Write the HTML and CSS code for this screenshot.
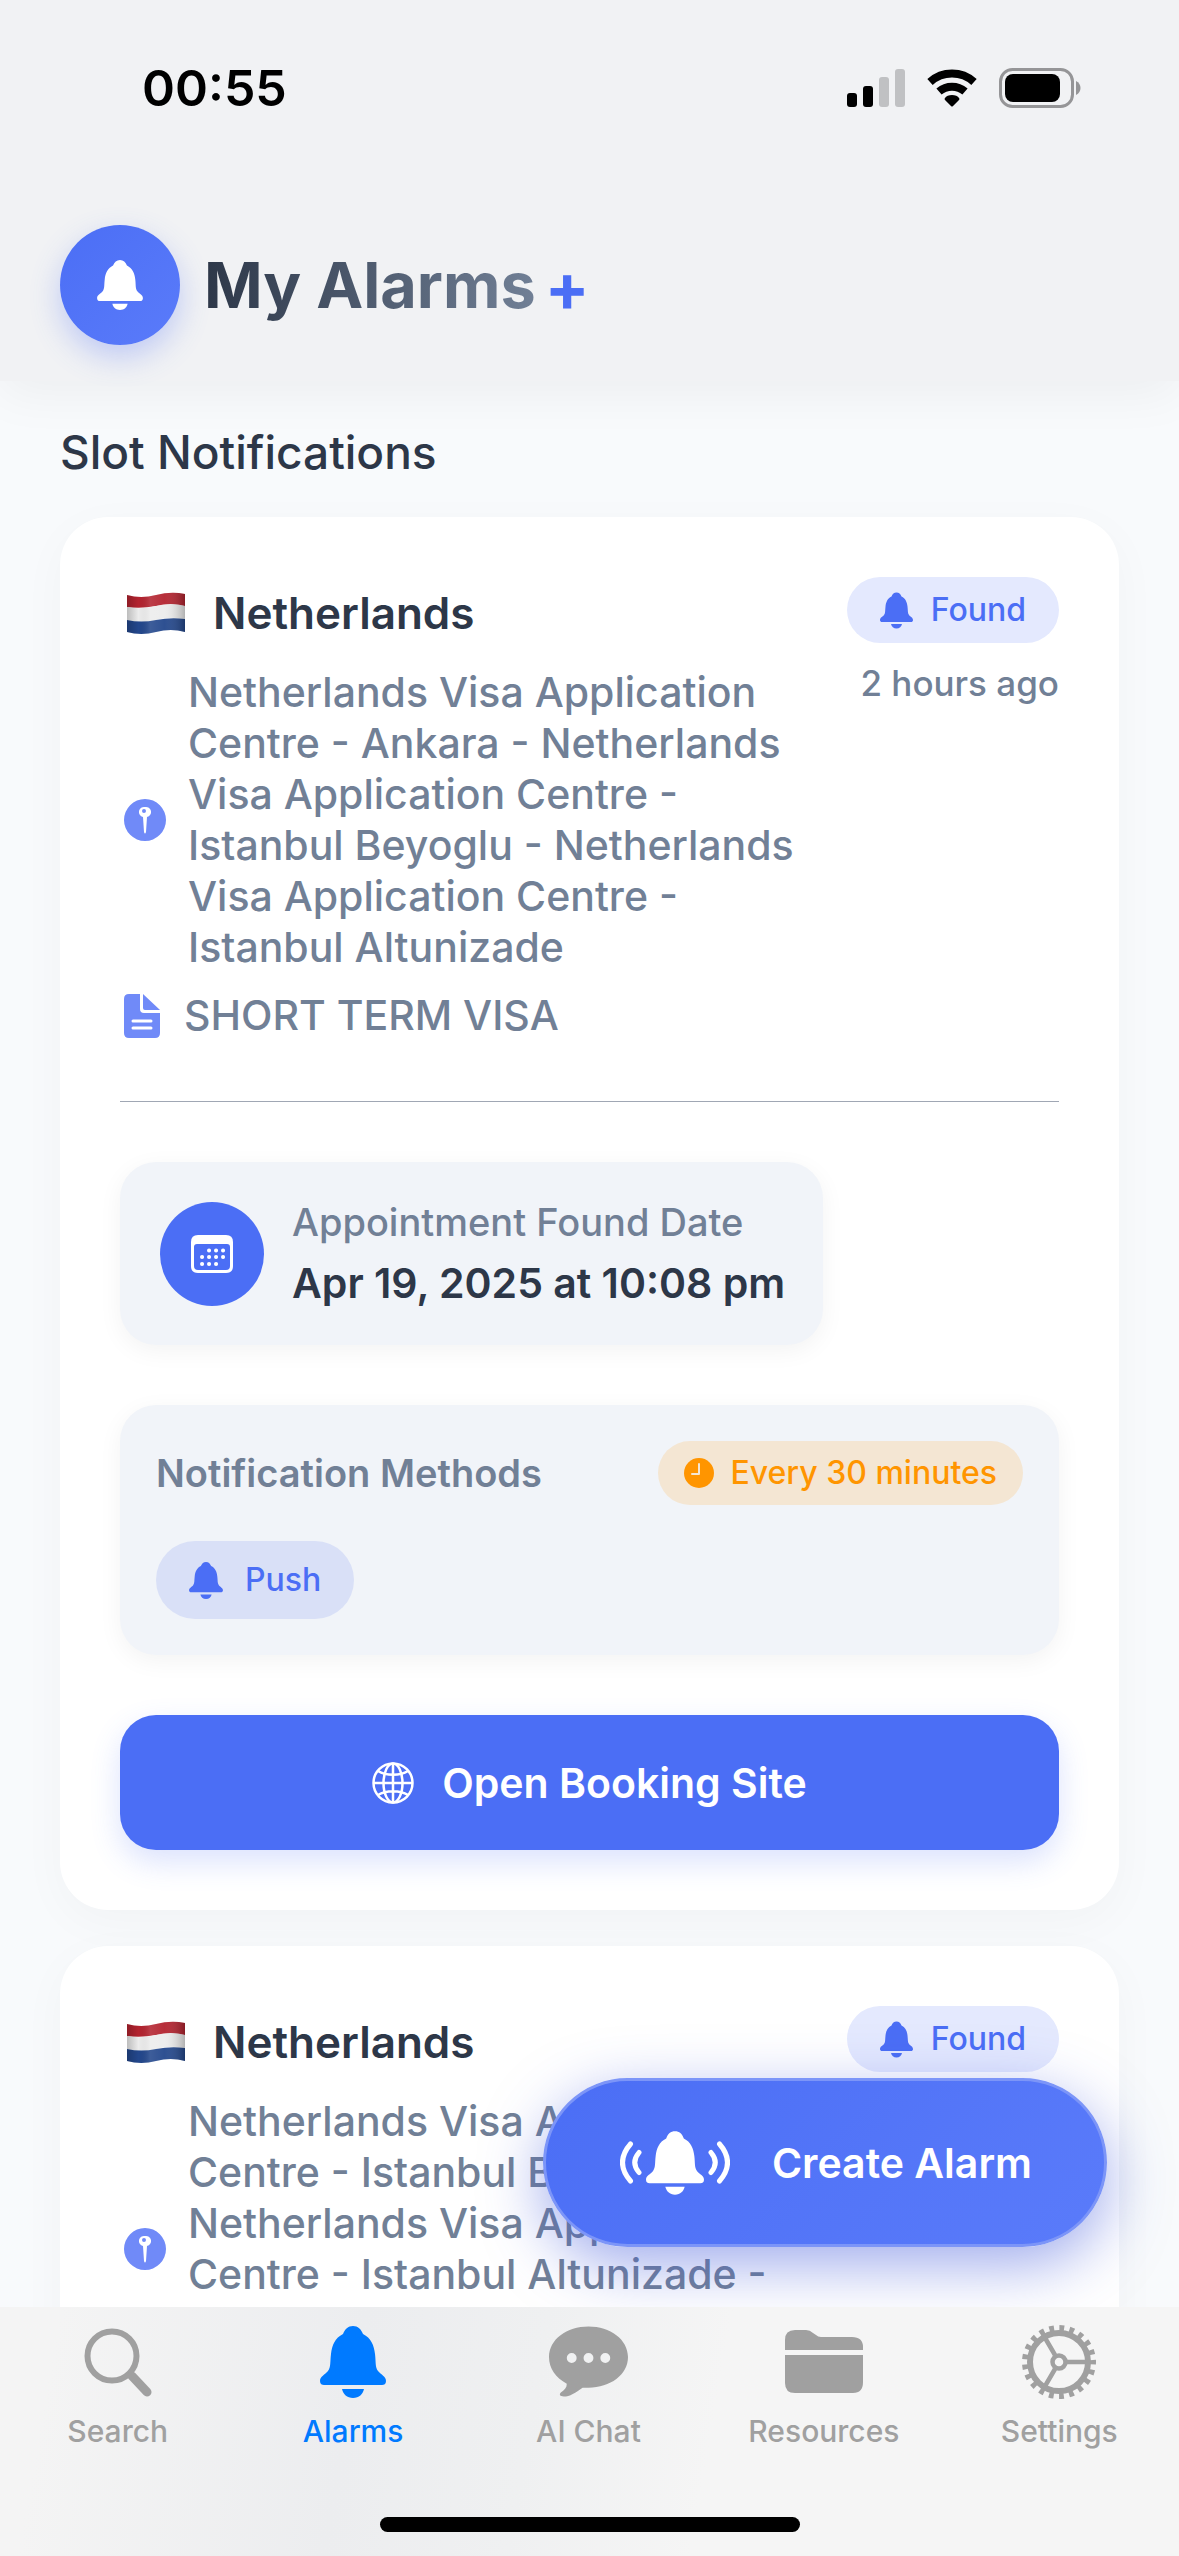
FILE: index.html
```html
<!DOCTYPE html>
<html lang="en">
<head>
<meta charset="utf-8">
<meta name="viewport" content="width=device-width, initial-scale=1">
<title>My Alarms</title>
<link rel="stylesheet" href="styles.css">
</head>
<body>
<svg class="sprite" aria-hidden="true">
  <defs>
    <linearGradient id="shade" x1="0" y1="0" x2="1" y2="0">
      <stop offset="0" stop-color="#000" stop-opacity=".2"/>
      <stop offset=".2" stop-color="#000" stop-opacity="0"/>
      <stop offset=".4" stop-color="#fff" stop-opacity=".12"/>
      <stop offset=".65" stop-color="#fff" stop-opacity=".05"/>
      <stop offset="1" stop-color="#000" stop-opacity=".25"/>
    </linearGradient>
  </defs>
  <symbol id="bell" viewBox="0 0 66 72">
    <path d="M33 0c5 0 8 3 10 8 8 4 11 11 12 20 1 8 0 13 3 17 3 4 8 5 8 10 0 3-2 4-4 4H4c-2 0-4-1-4-4 0-5 5-6 8-10 3-4 2-9 3-17C12 19 15 12 23 8 25 3 28 0 33 0z"/>
    <path d="M22 63h22c-1 5-5 9-11 9s-10-4-11-9z"/>
  </symbol>
  <symbol id="pin" viewBox="0 0 42 42">
    <path fill-rule="evenodd" d="M21 0a21 21 0 1 1 0 42 21 21 0 0 1 0-42zm0 8a5 5 0 0 0-2 10l1 15q1 3 2 0l1-15a5 5 0 0 0-2-10zm-1 2a2 2 0 1 1 0 4 2 2 0 0 1 0-4z"/>
  </symbol>
  <symbol id="doc" viewBox="0 0 36 44">
    <path d="M5 0h11v15q0 4 4 4h16v20q0 5-5 5H5q-5 0-5-5V5q0-5 5-5z"/>
    <path d="M19 0l17 16H21q-2 0-2-2z"/>
    <path class="cut" d="M9 27h18M9 34h18"/>
  </symbol>
  <symbol id="flag" viewBox="0 0 60 42">
    <path fill="#b3232f" d="M1 3q14 4 29 0t29-1v12q-14-3-29 0T1 15z"/>
    <path fill="#ececec" d="M1 15q14 3 29-1t29 0v13q-14-3-29 1T1 28z"/>
    <path fill="#23478c" d="M1 28q14 3 29 0t29-1v13q-14-4-29 0T1 40z"/>
    <path fill="url(#shade)" d="M1 3q14 4 29 0t29-1v38q-14-4-29 0T1 40z"/>
  </symbol>
</svg>
<div class="screen">
  <header class="top">
    <div class="status">
      <span class="time">00:55</span>
      <div class="indicators">
        <svg width="58" height="38" viewBox="0 0 58 38"><rect y="24" width="10" height="14" rx="3"/><rect x="16" y="17" width="10" height="21" rx="3"/><rect x="32" y="8" width="10" height="30" rx="3" opacity=".2"/><rect x="48" width="10" height="38" rx="3" opacity=".2"/></svg>
        <svg width="50" height="38" viewBox="0 0 50 38"><g fill="none" stroke="#000" stroke-width="8"><path d="M3 13a33 33 0 0 1 44 0"/><path d="M12 22.500a20 20 0 0 1 26 0"/></g><path d="M25 26c3 0 6 1 7 3q1 1 0 2l-6 6q-1 1-2 0l-6-6q-1-1 0-2c1-2 4-3 7-3z"/></svg>
        <svg width="82" height="40" viewBox="0 0 82 40"><rect x="1.500" y="1.500" width="72" height="37" rx="12" fill="none" stroke="#959597" stroke-width="3"/><rect x="6" y="6" width="55" height="28" rx="8"/><path fill="#959597" d="M77 13c6 3 6 11 0 14z"/></svg>
      </div>
    </div>
    <div class="title-row">
      <span class="badge"><svg width="46" height="50"><use href="#bell"/></svg></span>
      <h1>My Alarms</h1>
      <button class="add" type="button" aria-label="Add alarm">+</button>
    </div>
  </header>

  <main>
    <h2>Slot Notifications</h2>
    <article class="card">
      <div class="summary">
        <div class="place">
          <h3><svg width="60" height="42"><use href="#flag"/></svg>Netherlands</h3>
          <p class="centres"><svg width="42" height="42"><use href="#pin"/></svg><span>Netherlands Visa Application Centre - Ankara - Netherlands Visa Application Centre - Istanbul Beyoglu - Netherlands Visa Application Centre - Istanbul Altunizade</span></p>
          <p class="visa"><svg width="36" height="44"><use href="#doc"/></svg>SHORT TERM VISA</p>
        </div>
        <div class="state">
          <span class="pill found"><svg width="33" height="37"><use href="#bell"/></svg>Found</span>
          <span class="ago">2 hours ago</span>
        </div>
      </div>
      <hr>
      <div class="date-box">
        <span class="date-icon"><svg width="42" height="38" viewBox="0 0 42 38"><path fill-rule="evenodd" d="M7 0h28q7 0 7 7v24q0 7-7 7H7q-7 0-7-7V7q0-7 7-7zM6 9q-3 0-3 3v19q0 4 4 4h28q4 0 4-4V12q0-3-3-3z"/><path class="dots" d="M18 15.500h.1M25 15.500h.1M32 15.500h.1M11 22h.1M18 22h.1M25 22h.1M32 22h.1M11 29h.1M18 29h.1M25 29h.1"/></svg></span>
        <dl>
          <dt>Appointment Found Date</dt>
          <dd>Apr 19, 2025 at 10:08 pm</dd>
        </dl>
      </div>
      <section class="methods">
        <div class="methods-head">
          <h4>Notification Methods</h4>
          <span class="pill every"><svg width="30" height="30" viewBox="0 0 30 30"><circle cx="15" cy="15" r="15"/><path fill="none" stroke="#f4e6d3" stroke-width="2" stroke-linecap="round" stroke-linejoin="round" d="M15 6v10H8"/></svg>Every 30 minutes</span>
        </div>
        <span class="pill push"><svg width="34" height="37"><use href="#bell"/></svg>Push</span>
      </section>
      <button class="booking" type="button">
        <svg width="42" height="42" viewBox="0 0 42 42"><g fill="none" stroke="#fff" stroke-width="2.500"><circle cx="21" cy="21" r="19.500"/><ellipse cx="21" cy="21" rx="9.500" ry="19.500"/><path d="M21 1v40M1 21h40M6 9c8 5 22 5 30 0M6 33c8-5 22-5 30 0"/></g></svg>
        Open Booking Site
      </button>
    </article>

    <article class="card">
      <div class="summary">
        <div class="place">
          <h3><svg width="60" height="42"><use href="#flag"/></svg>Netherlands</h3>
          <p class="centres"><svg width="42" height="42"><use href="#pin"/></svg><span>Netherlands Visa Application Centre - Istanbul Beyoglu - Netherlands Visa Application Centre - Istanbul Altunizade - Netherlands Visa Application Centre - Ankara</span></p>
        </div>
        <div class="state">
          <span class="pill found"><svg width="33" height="37"><use href="#bell"/></svg>Found</span>
          <span class="ago">2 hours ago</span>
        </div>
      </div>
    </article>
  </main>

  <button class="fab" type="button">
    <svg width="110" height="64" viewBox="0 0 110 64"><use href="#bell" x="26" width="58" height="64"/><path fill="none" stroke="#fff" stroke-width="5" stroke-linecap="round" d="M10.500 13q-16 18.500 0 37M19 21.500q-8.500 10 0 20M99.500 13q16 18.500 0 37M91 21.500q8.500 10 0 20"/></svg>
    Create Alarm
  </button>

  <nav class="tabs">
    <div class="tab-row">
      <a href="#search"><svg width="68" height="74" viewBox="0 0 68 72"><g fill="none" stroke="currentColor" stroke-linecap="round"><circle cx="28" cy="30" r="24.500" stroke-width="6"/><path stroke-width="9" d="M48 50l15 16"/></g></svg>Search</a>
      <a class="active" href="#alarms" aria-current="page"><svg width="66" height="74"><use href="#bell"/></svg>Alarms</a>
      <a href="#chat"><svg width="79" height="74" viewBox="0 0 80 72"><path fill-rule="evenodd" d="M40 0c22 0 40 13 40 31S62 62 40 62h-6c-7 5-13 9-19 9-4 0-5-2-3-4 4-3 6-5 6-9C7 52 0 43 0 31 0 13 18 0 40 0zM23 27a5 5 0 1 0 0 10 5 5 0 0 0 0-10zm17 0a5 5 0 1 0 0 10 5 5 0 0 0 0-10zm17 0a5 5 0 1 0 0 10 5 5 0 0 0 0-10z"/></svg>AI Chat</a>
      <a href="#resources"><svg width="78" height="74" viewBox="0 0 78 72"><path d="M0 24V14Q0 4 10 4h11q4 0 7 3l3 2q2 2 5 2h31q11 0 11 10v3zM0 29h78v27q0 11-10 11H10Q0 67 0 57z"/></svg>Resources</a>
      <a href="#settings"><svg width="76" height="74" viewBox="-38 -37 76 74"><g fill="none" stroke="currentColor"><circle r="29" stroke-width="6"/><circle r="6.500" stroke-width="4.500"/><circle r="34" stroke-width="6" stroke-dasharray="4.800 5.372" stroke-dashoffset="2.400"/><path stroke-width="4.500" d="M8 0h20M-4 -7l-10.500 -18M-4 7l-10.500 18"/></g></svg>Settings</a>
    </div>
    <div class="home"></div>
  </nav>
</div>
</body>
</html>
```
FILE: styles.css
```css
* {
  box-sizing: border-box;
  margin: 0;
  padding: 0;
}

body {
  background: #f8fafc;
  color: #2d3748;
  font-family: Inter, "Liberation Sans", sans-serif;
}

svg {
  display: block;
  flex: none;
  fill: currentColor;
}

button {
  border: 0;
  font: inherit;
}

.sprite {
  position: absolute;
  width: 0;
  height: 0;
}

.screen {
  display: flex;
  flex-direction: column;
  height: 100vh;
  overflow: hidden;
}

/* Header */

.top {
  flex: none;
  padding: 56px 60px 36px;
  background: #f1f2f4;
  box-shadow: 0 12px 48px rgba(0, 0, 0, 0.05);
  z-index: 1;
}

.status {
  display: flex;
  justify-content: space-between;
  align-items: center;
  height: 64px;
  padding: 0 38px 0 82px;
  color: #000;
}

.time {
  font-size: 50px;
  font-weight: 600;
}

.indicators {
  display: flex;
  align-items: center;
  gap: 22px;
}

.title-row {
  display: flex;
  align-items: center;
  margin-top: 105px;
}

.badge {
  display: grid;
  place-items: center;
  width: 120px;
  height: 120px;
  margin-right: 24px;
  border-radius: 50%;
  background: linear-gradient(135deg, #4b6ef5, #5a7bfa);
  box-shadow: 0 12px 30px rgba(75, 110, 245, 0.3);
  color: #fff;
}

h1 {
  background: linear-gradient(90deg, #2d3748, #718096);
  background-clip: text;
  color: transparent;
  font-size: 63px;
  font-weight: 700;
  line-height: 80px;
}

.add {
  margin-left: 9px;
  padding-top: 4px;
  background: none;
  color: #4b6ef5;
  font-size: 66px;
  font-weight: 700;
  line-height: 80px;
}

/* Content */

main {
  flex: 1;
  min-height: 0;
  padding: 42px 60px 0;
  overflow: hidden;
}

h2 {
  margin-bottom: 36px;
  font-size: 46px;
  font-weight: 500;
  line-height: 58px;
}

.card {
  margin-bottom: 36px;
  padding: 60px;
  border-radius: 48px;
  background: #fff;
  box-shadow: 0 12px 48px rgba(0, 0, 0, 0.03);
}

.summary {
  display: flex;
  justify-content: space-between;
}

.place {
  width: 700px;
}

h3 {
  display: flex;
  align-items: center;
  gap: 27px;
  padding: 6px;
  font-size: 44px;
  font-weight: 600;
  line-height: 60px;
}

.centres,
.visa {
  display: flex;
  align-items: center;
  padding-left: 4px;
  color: #718096;
  font-size: 41px;
  font-weight: 500;
  line-height: 51px;
}

.centres {
  gap: 22px;
  margin-top: 18px;
}

.visa {
  gap: 24px;
  margin-top: 17px;
}

.centres svg,
.visa svg {
  color: #708af8;
}

.cut {
  fill: none;
  stroke: #fff;
  stroke-width: 3;
  stroke-linecap: round;
}

.state {
  display: flex;
  flex-direction: column;
  align-items: flex-end;
  gap: 18px;
}

.pill {
  display: inline-flex;
  align-items: center;
  border-radius: 39px;
  font-size: 32px;
  font-weight: 500;
  line-height: 42px;
}

.found {
  gap: 18px;
  height: 66px;
  padding: 0 33px;
  background: #e4e9fe;
  color: #4b6ef5;
}

.ago {
  color: #718096;
  font-size: 35px;
  font-weight: 500;
  line-height: 44px;
}

hr {
  height: 1px;
  margin: 60px 0;
  border: 0;
  background: #a0a7b4;
}

.date-box {
  display: flex;
  align-items: center;
  gap: 28px;
  width: fit-content;
  padding: 36px 38px 36px 40px;
  border-radius: 36px;
  background: #f1f4f9;
  box-shadow: 0 6px 24px rgba(0, 0, 0, 0.05);
}

.date-icon {
  display: grid;
  place-items: center;
  width: 104px;
  height: 104px;
  border-radius: 50%;
  background: #4b6ef5;
  color: #fff;
}

.dots {
  stroke: #fff;
  stroke-width: 4;
  stroke-linecap: round;
}

dt {
  color: #718096;
  font-size: 38px;
  font-weight: 500;
  line-height: 48px;
}

dd {
  margin-top: 12px;
  font-size: 41px;
  font-weight: 600;
  line-height: 51px;
}

.methods {
  margin: 60px 0;
  padding: 36px;
  border-radius: 36px;
  background: #f1f4f9;
  box-shadow: 0 6px 24px rgba(0, 0, 0, 0.05);
}

.methods-head {
  display: flex;
  justify-content: space-between;
  align-items: center;
  margin-bottom: 36px;
}

h4 {
  color: #718096;
  font-size: 38px;
  font-weight: 600;
  line-height: 48px;
}

.every {
  gap: 16px;
  height: 64px;
  padding: 0 26px;
  background: #f4e6d3;
  color: #ff9500;
}

.push {
  gap: 22px;
  height: 78px;
  padding: 0 33px;
  background: #d9e0f7;
  color: #4b6ef5;
}

.booking {
  display: flex;
  justify-content: center;
  align-items: center;
  gap: 28px;
  width: 100%;
  height: 135px;
  border-radius: 36px;
  background: #4b6ef5;
  box-shadow: 0 12px 30px rgba(75, 110, 245, 0.2);
  color: #fff;
  font-size: 41px;
  font-weight: 600;
}

/* Floating action button */

.fab {
  position: absolute;
  right: 72px;
  bottom: 309px;
  display: flex;
  align-items: center;
  gap: 42px;
  height: 169px;
  padding: 0 72px 0 74px;
  border: 3px solid #7c95f8;
  border-radius: 85px;
  background: linear-gradient(135deg, #4b6ef5, #5a7bfa);
  box-shadow: 0 18px 60px rgba(65, 90, 220, 0.5);
  color: #fff;
  font-size: 41px;
  font-weight: 600;
}

/* Tab bar */

.tabs {
  flex: none;
  display: flex;
  flex-direction: column;
  align-items: center;
  padding: 18px 0 24px;
  background: linear-gradient(100deg, #f4f4f4 5%, #ecedef 30%, #eff0f1 45%, #f5f5f5 60%);
  z-index: 1;
}

.tab-row {
  display: grid;
  grid-template-columns: repeat(5, 1fr);
  width: 100%;
  padding-right: 2px;
}

.tab-row a {
  display: flex;
  flex-direction: column;
  align-items: center;
  gap: 14px;
  height: 192px;
  color: #a0a0a0;
  font-size: 30px;
  font-weight: 500;
  line-height: 36px;
  text-decoration: none;
}

.tab-row a.active {
  color: #007aff;
}

.home {
  width: 420px;
  height: 15px;
  border-radius: 8px;
  background: #000;
}
```
